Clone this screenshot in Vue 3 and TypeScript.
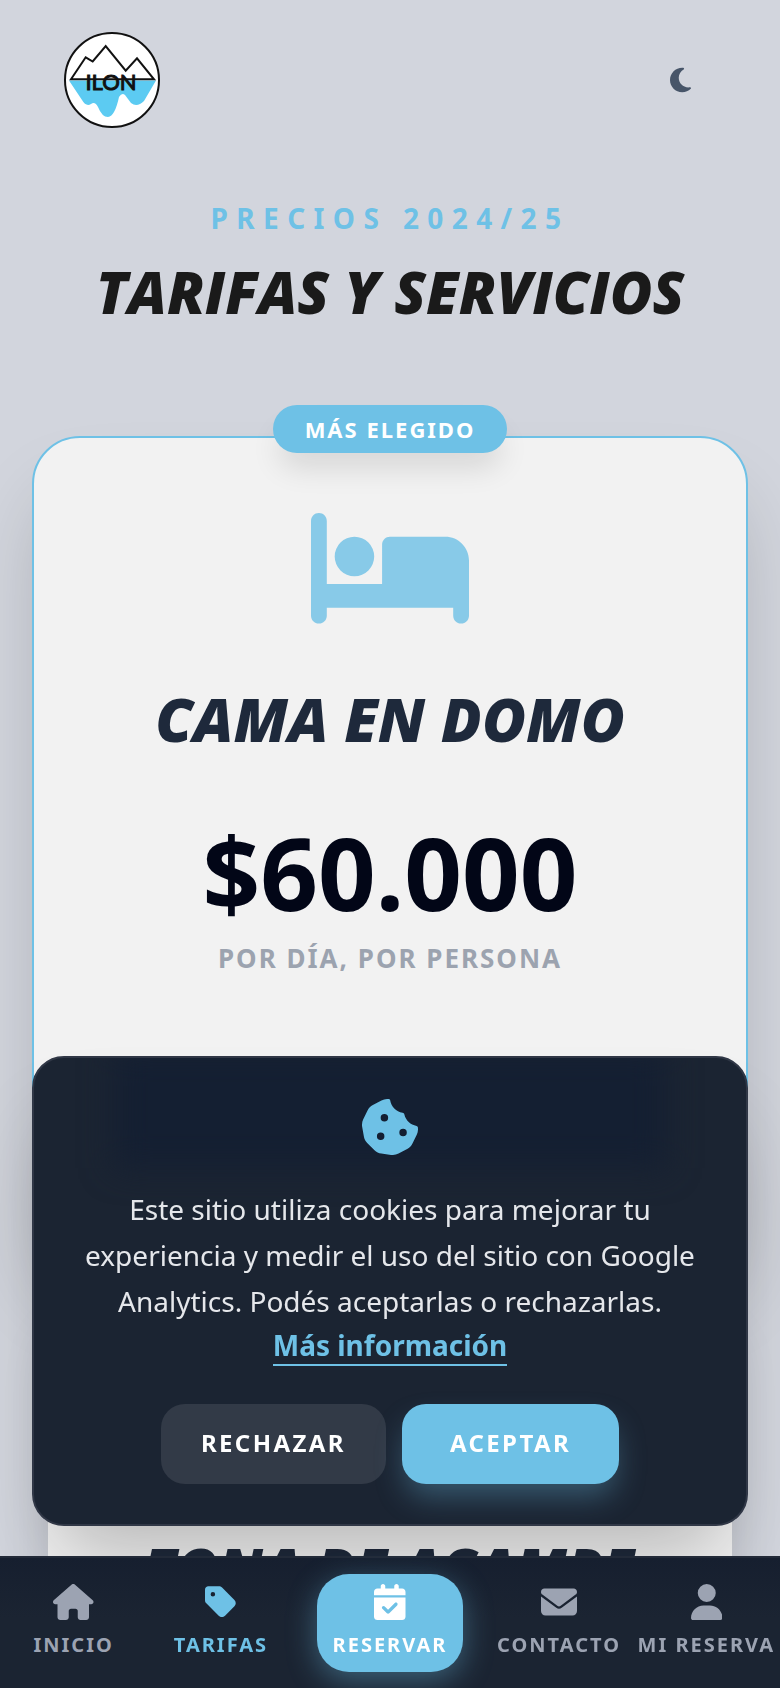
<script setup lang="ts">
import { ref } from 'vue'

interface NavItem {
  label: string
  width: number
  path: string
  kind: 'plain' | 'active' | 'primary'
}

const cookiesOpen = ref(true)

const navItems: NavItem[] = [
  {
    label: 'Inicio',
    width: 576,
    kind: 'plain',
    path: 'M575.8 255.5c0 18-15 32.100-32 32.100h-32l.7 160.200c0 2.700-.2 5.400-.5 8.100V472c0 22.100-17.900 40-40 40H456c-1.100 0-2.200 0-3.300-.1c-1.400 .1-2.800 .1-4.200 .1H416 392c-22.100 0-40-17.900-40-40V448 384c0-17.700-14.300-32-32-32H256c-17.700 0-32 14.300-32 32v64 24c0 22.100-17.900 40-40 40H160 128.100c-1.500 0-3-.1-4.500-.2c-1.200 .1-2.400 .2-3.600 .2H104c-22.100 0-40-17.900-40-40V360c0-.9 0-1.900 .1-2.800V287.600H32c-18 0-32-14-32-32.100c0-9 3-17 10-24L266.400 8c7-7 15-8 22-8s15 2 21 7L564.800 231.500c8 7 12 15 11 24z'
  },
  {
    label: 'Tarifas',
    width: 448,
    kind: 'active',
    path: 'M0 80V229.500c0 17 6.700 33.300 18.700 45.300l176 176c25 25 65.500 25 90.500 0L418.700 317.300c25-25 25-65.500 0-90.500l-176-176c-12-12-28.300-18.700-45.300-18.700H48C21.500 32 0 53.500 0 80zm112 32a32 32 0 1 1 0 64 32 32 0 1 1 0-64z'
  },
  {
    label: 'Reservar',
    width: 448,
    kind: 'primary',
    path: 'M128 0c17.700 0 32 14.300 32 32V64H288V32c0-17.700 14.300-32 32-32s32 14.300 32 32V64h48c26.500 0 48 21.500 48 48v48H0V112C0 85.500 21.500 64 48 64H96V32c0-17.700 14.300-32 32-32zM0 192H448V464c0 26.500-21.500 48-48 48H48c-26.500 0-48-21.500-48-48V192zM329 305c9.400-9.400 9.400-24.600 0-33.900s-24.600-9.400-33.900 0l-95 95-47-47c-9.400-9.400-24.600-9.400-33.900 0s-9.400 24.600 0 33.900l64 64c9.400 9.400 24.600 9.400 33.900 0L329 305z'
  },
  {
    label: 'Contacto',
    width: 512,
    kind: 'plain',
    path: 'M48 64C21.500 64 0 85.500 0 112c0 15.100 7.100 29.300 19.200 38.400L236.800 313.600c11.400 8.500 27 8.500 38.400 0L492.800 150.400c12.100-9.100 19.200-23.300 19.200-38.400c0-26.500-21.500-48-48-48H48zM0 176V384c0 35.300 28.700 64 64 64H448c35.300 0 64-28.700 64-64V176L294.400 339.200c-22.800 17.100-54 17.100-76.800 0L0 176z'
  },
  {
    label: 'Mi reserva',
    width: 448,
    kind: 'plain',
    path: 'M224 256A128 128 0 1 0 224 0a128 128 0 1 0 0 256zm-45.700 48C79.800 304 0 383.800 0 482.300C0 498.700 13.300 512 29.700 512H418.300c16.400 0 29.700-13.300 29.700-29.700C448 383.800 368.200 304 269.700 304H178.300z'
  }
]
</script>

<template>
  <div class="page">
    <header class="topbar">
      <a class="logo" href="#" aria-label="ILON">
        <svg viewBox="0 0 96 96">
          <circle cx="48" cy="48" r="47" fill="#fff" stroke="#111" stroke-width="2" />
          <path d="M5 48.500H92L80 69Q73 76 67 71L61 63Q58 60 55 65Q51 84 44 85Q38 85 34 75Q31 69 27 72Q22 75 18 68Z" fill="#5ccbf2" />
          <path d="M7 47.300L21.700 25.300L28.700 29.500L41.700 14L61.700 38.700L73 26.300L90 47.300Z" fill="none" stroke="#111" stroke-width="2" />
          <text x="47" y="57.500" text-anchor="middle" class="logo-word">ILON</text>
        </svg>
      </a>
      <button class="theme" type="button" aria-label="Modo oscuro">
        <svg viewBox="0 0 384 512">
          <path d="M223.500 32C100 32 0 132.300 0 256S100 480 223.500 480c60.600 0 115.500-24.200 155.800-63.400c5-4.900 6.300-12.500 3.100-18.700s-10.100-9.700-17-8.500c-9.800 1.700-19.800 2.600-30.100 2.600c-96.900 0-175.500-78.800-175.500-176c0-65.800 36-123.100 89.300-153.300c6.100-3.500 9.200-10.500 7.700-17.300s-7.300-11.900-14.300-12.500c-6.300-.5-12.600-.8-19-.8z" />
        </svg>
      </button>
    </header>

    <main class="content">
      <p class="eyebrow">PRECIOS 2024/25</p>
      <h1 class="title">TARIFAS Y SERVICIOS</h1>

      <article class="card featured">
        <span class="badge">MÁS ELEGIDO</span>
        <svg class="bed" viewBox="0 32 640 448" aria-hidden="true">
          <path d="M32 32c17.700 0 32 14.300 32 32V320H288V160c0-17.700 14.300-32 32-32H544c53 0 96 43 96 96V448c0 17.700-14.300 32-32 32s-32-14.300-32-32V416H64v32c0 17.700-14.300 32-32 32s-32-14.300-32-32V64C0 46.300 14.300 32 32 32zm144 96a80 80 0 1 1 0 160 80 80 0 1 1 0-160z" />
        </svg>
        <h2 class="card-title">CAMA EN DOMO</h2>
        <p class="price">$60.000</p>
        <p class="unit">POR DÍA, POR PERSONA</p>
      </article>

      <article class="card second">
        <h2 class="card-title">ZONA DE ACAMPE</h2>
      </article>
    </main>

    <section v-if="cookiesOpen" class="cookies" aria-label="Cookies">
      <svg class="cookie" viewBox="16 16 480 480" aria-hidden="true">
        <path d="M257.500 27.600c-.8-5.400-4.900-9.800-10.300-10.600c-22.100-3.100-44.600 .9-64.400 11.400l-74 39.500C89.100 78.400 73.200 94.900 63.400 115L26.700 190.600c-9.800 20.100-13 42.900-9.100 64.900l14.500 82.800c3.900 22.100 14.600 42.300 30.700 57.900l60.300 58.400c16.100 15.600 36.600 25.600 58.700 28.700l83 11.700c22.100 3.100 44.600-.9 64.400-11.400l74-39.500c19.700-10.500 35.600-27 45.400-47.200l36.700-75.500c9.800-20.100 13-42.900 9.100-64.900c-.9-5.300-5.300-9.300-10.600-10.100c-51.500-8.200-92.800-47.100-104.500-97.400c-1.800-7.600-8-13.400-15.700-14.600c-54.600-8.700-97.700-52-106.200-106.800zM208 144a32 32 0 1 1 0 64 32 32 0 1 1 0-64zM144 336a32 32 0 1 1 64 0 32 32 0 1 1-64 0zm224-64a32 32 0 1 1 0 64 32 32 0 1 1 0-64z" />
      </svg>
      <p class="cookie-text">
        Este sitio utiliza cookies para mejorar tu experiencia y medir el uso del sitio con Google Analytics. Podés aceptarlas o rechazarlas.
      </p>
      <a class="more" href="#">Más información</a>
      <div class="actions">
        <button class="btn reject" type="button" @click="cookiesOpen = false">RECHAZAR</button>
        <button class="btn accept" type="button" @click="cookiesOpen = false">ACEPTAR</button>
      </div>
    </section>

    <nav class="tabs">
      <a v-for="item in navItems" :key="item.label" href="#" class="tab" :class="item.kind">
        <svg class="tab-icon" :viewBox="`0 0 ${item.width} 512`" aria-hidden="true">
          <path :d="item.path" fill-rule="evenodd" />
        </svg>
        <span>{{ item.label }}</span>
      </a>
    </nav>
  </div>
</template>

<style>
body {
  background: #d2d5dd;
}
</style>

<style scoped>
.page {
  height: 100vh;
  overflow: hidden;
  background: #d2d5dd;
  font-family: 'Noto Sans', sans-serif;
  box-sizing: border-box;
}
.page *,
.page *::before {
  box-sizing: border-box;
}
h1,
h2,
p {
  margin: 0;
}
svg {
  display: block;
  fill: currentColor;
}
a {
  text-decoration: none;
}
button {
  border: 0;
  font-family: inherit;
  cursor: pointer;
}
.topbar {
  display: flex;
  align-items: center;
  justify-content: space-between;
  padding: 32px 64px;
}
.logo svg {
  width: 96px;
  height: 96px;
}
.logo-word {
  font: 400 22px Lato, sans-serif;
  fill: #111;
  stroke: #111;
  stroke-width: 1px;
}
.theme {
  display: grid;
  place-items: center;
  width: 72px;
  height: 72px;
  padding: 0;
  background: none;
  color: #475569;
}
.theme svg {
  height: 28px;
}
.content {
  display: flex;
  flex-direction: column;
  padding: 36px 32px 0;
  text-align: center;
}
.eyebrow {
  color: #6ec1e6;
  font-size: 28px;
  font-weight: 700;
  line-height: 44px;
  letter-spacing: 0.3em;
}
.title,
.card-title {
  font-family: 'Permanent Marker', 'Open Sans', sans-serif;
  font-style: italic;
  font-weight: 800;
  white-space: nowrap;
}
.title {
  margin-top: 16px;
  color: #1a1a1a;
  font-size: 58px;
  line-height: 72px;
}
.card {
  position: relative;
  display: flex;
  flex-direction: column;
  align-items: center;
  border-radius: 48px;
  background: #f2f2f2;
}
.featured {
  height: 824px;
  margin-top: 108px;
  padding-top: 75px;
  border: 2px solid #6ec1e6;
  box-shadow: 0 50px 80px -16px rgba(0, 0, 0, 0.22);
}
.badge {
  position: absolute;
  top: -33px;
  padding: 0 32px;
  border-radius: 24px;
  background: #6ec1e6;
  color: #fff;
  font-size: 22px;
  font-weight: 700;
  line-height: 48px;
  letter-spacing: 2px;
  white-space: nowrap;
  box-shadow: 0 20px 30px -6px rgba(0, 0, 0, 0.12);
}
.bed {
  width: 158px;
  color: #6ec1e6;
  opacity: 0.8;
}
.card-title {
  color: #1e293b;
  font-size: 60px;
  line-height: 72px;
}
.featured .card-title {
  margin-top: 59px;
}
.price {
  margin-top: 61px;
  color: #020617;
  font-size: 101px;
  font-weight: 700;
  line-height: 112px;
}
.unit {
  margin-top: 12px;
  color: #9ca3af;
  font-size: 26px;
  font-weight: 700;
  line-height: 36px;
  letter-spacing: 2px;
}
.second {
  height: 800px;
  margin: 40px 16px 0;
  padding-top: 232px;
  box-shadow: 0 20px 50px rgba(0, 0, 0, 0.1);
}
.second .card-title {
  font-size: 57px;
}
.cookies {
  position: fixed;
  right: 32px;
  bottom: 162px;
  left: 32px;
  display: flex;
  flex-direction: column;
  align-items: center;
  padding: 41px 46px 40px;
  border: 2px solid #303746;
  border-radius: 32px;
  background: #1b2432;
  box-shadow: 0 50px 80px -24px rgba(0, 0, 0, 0.25);
  text-align: center;
  overflow: hidden;
}
.cookies::before {
  content: '';
  position: absolute;
  top: -10px;
  right: 80px;
  left: 80px;
  height: 120px;
  background: #141f32;
  filter: blur(16px);
}
.cookie {
  position: relative;
  width: 56px;
  height: 56px;
  color: #6ec1e6;
}
.cookie-text {
  margin-top: 31px;
  color: #e5e7eb;
  font-size: 28px;
  line-height: 46px;
}
.more {
  margin-top: 2px;
  border-bottom: 2px solid #6ec1e6;
  color: #6ec1e6;
  font-size: 28px;
  font-weight: 700;
  line-height: 38px;
}
.actions {
  display: flex;
  gap: 16px;
  margin-top: 38px;
}
.btn {
  height: 80px;
  border-radius: 24px;
  color: #fff;
  font-size: 24px;
  font-weight: 700;
  letter-spacing: 0.1em;
}
.reject {
  padding: 0 40px 3px;
  background: #323a47;
}
.accept {
  padding: 0 48px 3px;
  background: #6ec1e6;
  box-shadow: 0 16px 30px -4px rgba(110, 193, 230, 0.35);
}
.tabs {
  position: fixed;
  right: 0;
  bottom: 0;
  left: 0;
  display: grid;
  grid-template-columns: minmax(0, 1fr) minmax(0, 1fr) auto minmax(0, 1fr) minmax(0, 1fr);
  align-items: center;
  padding: 16px 0;
  border-top: 2px solid #222a38;
  background: linear-gradient(#161f2f, #1b2432 60px);
}
.tab {
  display: flex;
  flex-direction: column;
  align-items: center;
  gap: 10px;
  padding: 10px 0 12px;
  color: #9ca3b2;
  font-size: 20px;
  font-weight: 700;
  line-height: 30px;
  letter-spacing: 2px;
  text-transform: uppercase;
  white-space: nowrap;
}
.tab-icon {
  height: 36px;
}
.active {
  color: #6ec1e6;
}
.primary {
  margin: 0 22px;
  padding: 10px 16px 12px;
  border-radius: 32px;
  background: #6ec1e6;
  color: #fff;
  box-shadow: 0 8px 30px rgba(110, 193, 230, 0.4);
}
</style>
